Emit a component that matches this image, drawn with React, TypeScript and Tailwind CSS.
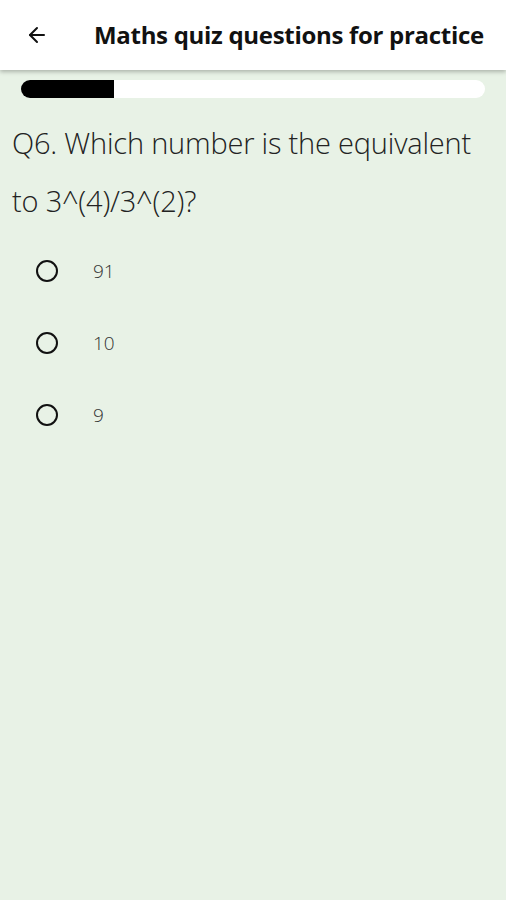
import { ArrowLeft } from 'lucide-react';

const OPTIONS = ['91', '10', '9'];

export default function App() {
    return (
        <div className="flex h-[900px] w-[506px] flex-col overflow-hidden bg-[#e8f2e6] font-['Open_Sans',sans-serif]">
            <header className="relative z-10 flex h-[70px] items-center bg-white shadow-[0_2px_4px_rgba(0,0,0,0.25)]">
                <button className="ml-[24px] flex size-[26px] items-center justify-center text-[#111]" aria-label="Back">
                    <ArrowLeft className="size-[24px]" strokeWidth={2} />
                </button>
                <h1 className="ml-[44px] text-[24px] font-bold tracking-[-0.3px] text-[#111]">
                    Maths quiz questions for practice
                </h1>
            </header>

            <div className="mx-[21px] mt-[10px] h-[18px] rounded-full bg-white">
                <div className="h-full w-[93px] rounded-l-full bg-black" />
            </div>

            <p className="mt-[16px] pr-[20px] pl-[12px] text-[29px] leading-[58px] font-light tracking-[-0.2px] text-[#222]">
                Q6. Which number is the equivalent to 3^(4)/3^(2)?
            </p>

            <ul className="mt-[5px] flex flex-col">
                {OPTIONS.map((opt) => (
                    <li key={opt} className="flex h-[72px] items-center">
                        <span className="ml-[36px] size-[22px] rounded-full border-[2.5px] border-[#111]" />
                        <span className="ml-[35px] text-[19px] font-light text-[#333]">{opt}</span>
                    </li>
                ))}
            </ul>
        </div>
    );
}
